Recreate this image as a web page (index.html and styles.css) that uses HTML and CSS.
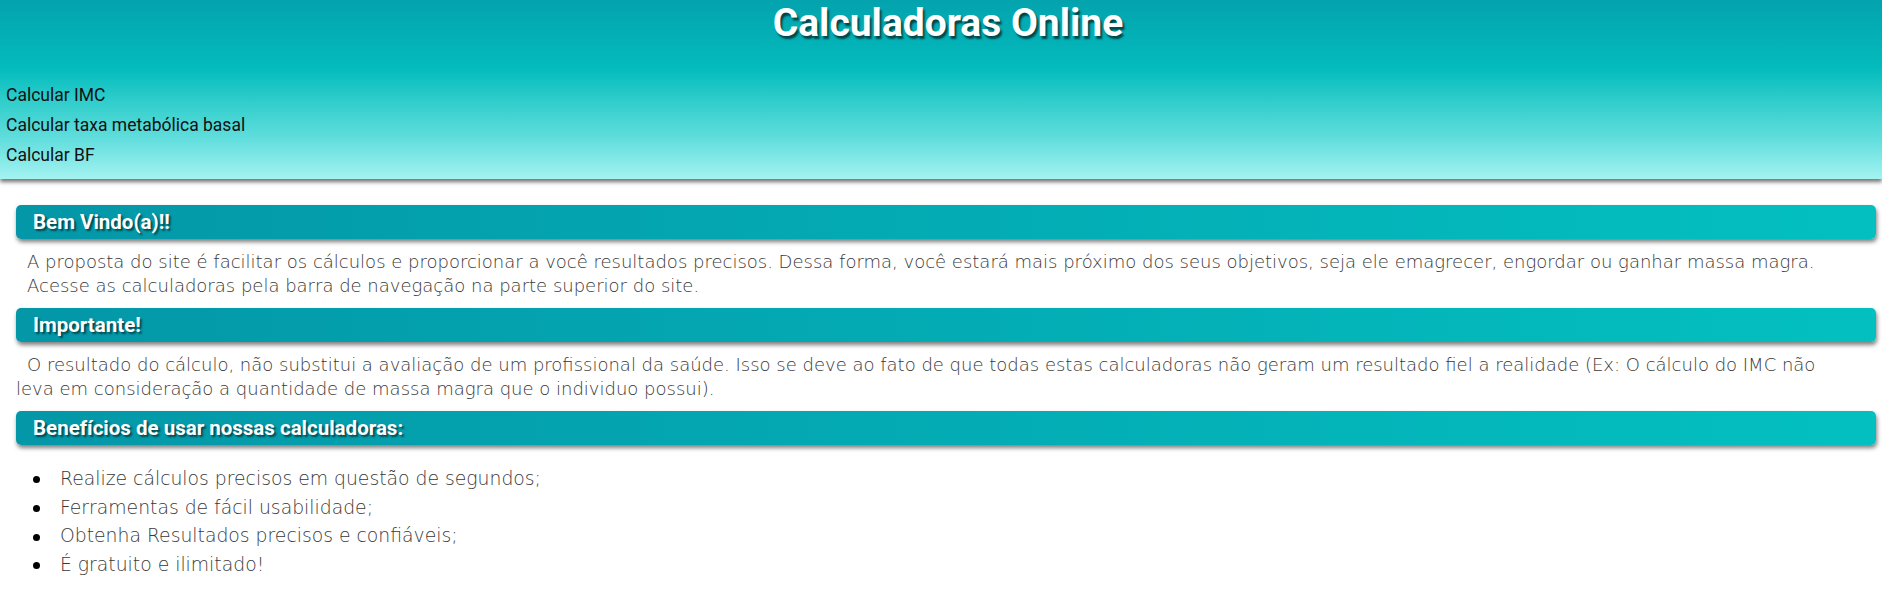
FILE: index.html
```html
<!DOCTYPE html>
<html lang="pt-BR">
<head>
<meta charset="utf-8">
<title>Calculadoras Online</title>
<link rel="stylesheet" href="styles.css">
</head>
<body>
<header class="site-header">
  <h1 class="site-title">Calculadoras Online</h1>
  <nav class="site-nav">
    <ul class="nav-list">
      <li><a class="nav-link" href="#">Calcular IMC</a></li>
      <li><a class="nav-link" href="#">Calcular taxa metabólica basal</a></li>
      <li><a class="nav-link" href="#">Calcular BF</a></li>
    </ul>
  </nav>
</header>
<main class="content">
  <section class="section">
    <h2 class="section-title">Bem Vindo(a)!!</h2>
    <p class="section-text">
      <span class="text-line">A proposta do site é facilitar os cálculos e proporcionar a você resultados precisos. Dessa forma, você estará mais próximo dos seus objetivos, seja ele emagrecer, engordar ou ganhar massa magra.</span>
      <span class="text-line">Acesse as calculadoras pela barra de navegação na parte superior do site.</span>
    </p>
  </section>
  <section class="section">
    <h2 class="section-title">Importante!</h2>
    <p class="section-text indented">O resultado do cálculo, não substitui a avaliação de um profissional da saúde. Isso se deve ao fato de que todas estas calculadoras não geram um resultado fiel a realidade (Ex: O cálculo do IMC não<br>leva em consideração a quantidade de massa magra que o individuo possui).</p>
  </section>
  <section class="section">
    <h2 class="section-title">Benefícios de usar nossas calculadoras:</h2>
    <ul class="benefits">
      <li class="benefit">Realize cálculos precisos em questão de segundos;</li>
      <li class="benefit">Ferramentas de fácil usabilidade;</li>
      <li class="benefit">Obtenha Resultados precisos e confiáveis;</li>
      <li class="benefit">É gratuito e ilimitado!</li>
    </ul>
  </section>
</main>
</body>
</html>
```

FILE: styles.css
```css
html, body {
  margin: 0;
  padding: 0;
  background: #fff;
}

body {
  font-family: Roboto, "Liberation Sans", sans-serif;
}

.site-header {
  height: 179px;
  background: linear-gradient(to bottom, #03a3ae 0%, #03bbbd 38%, #2ecdcb 56%, #62dedd 78%, #a4f3f1 100%);
  box-shadow: 0 3px 4px rgba(0, 0, 0, 0.55);
  position: relative;
  z-index: 1;
}

.site-title {
  margin: 0;
  padding-left: 14px;
  text-align: center;
  font-family: Roboto, sans-serif;
  font-weight: 700;
  font-size: 39px;
  line-height: 47px;
  color: #fff;
  text-shadow: 2px 3px 2px rgba(0, 0, 0, 0.6);
}

.site-nav {
  margin-top: 33px;
}

.nav-list {
  list-style: none;
  margin: 0;
  padding: 0 0 0 6px;
}

.nav-link {
  display: block;
  font-family: Roboto, sans-serif;
  font-size: 17.5px;
  line-height: 30px;
  color: #111;
  text-decoration: none;
}

.content {
  padding: 26px 6px 0 16px;
}

.section-title {
  margin: 0;
  height: 34px;
  padding: 1px 17px 0;
  box-sizing: border-box;
  font-family: Roboto, sans-serif;
  font-weight: 700;
  font-size: 20.5px;
  line-height: 33px;
  color: #fff;
  text-shadow: 2px 2px 2px rgba(0, 0, 0, 0.55);
  background: linear-gradient(to right, #0397a8, #03c0c0);
  border-radius: 5px;
  box-shadow: 1px 3px 4px rgba(0, 0, 0, 0.5);
}

.section-text {
  margin: 11px 0 10px;
  font-family: "DejaVu Sans", sans-serif;
  font-weight: 200;
  font-size: 18px;
  line-height: 24px;
  color: #383838;
}

.text-line {
  display: block;
  text-indent: 11px;
}

.indented {
  text-indent: 11px;
}

.benefits {
  list-style: none;
  margin: 20px 0 0;
  padding-left: 44px;
  font-family: "DejaVu Sans", sans-serif;
  font-weight: 200;
  font-size: 18.8px;
  line-height: 28.7px;
  color: #383838;
}

.benefit {
  position: relative;
}

.benefit::before {
  content: "";
  position: absolute;
  left: -27px;
  top: calc(50% - 3px);
  width: 7px;
  height: 7px;
  border-radius: 50%;
  background: #000;
}
```
